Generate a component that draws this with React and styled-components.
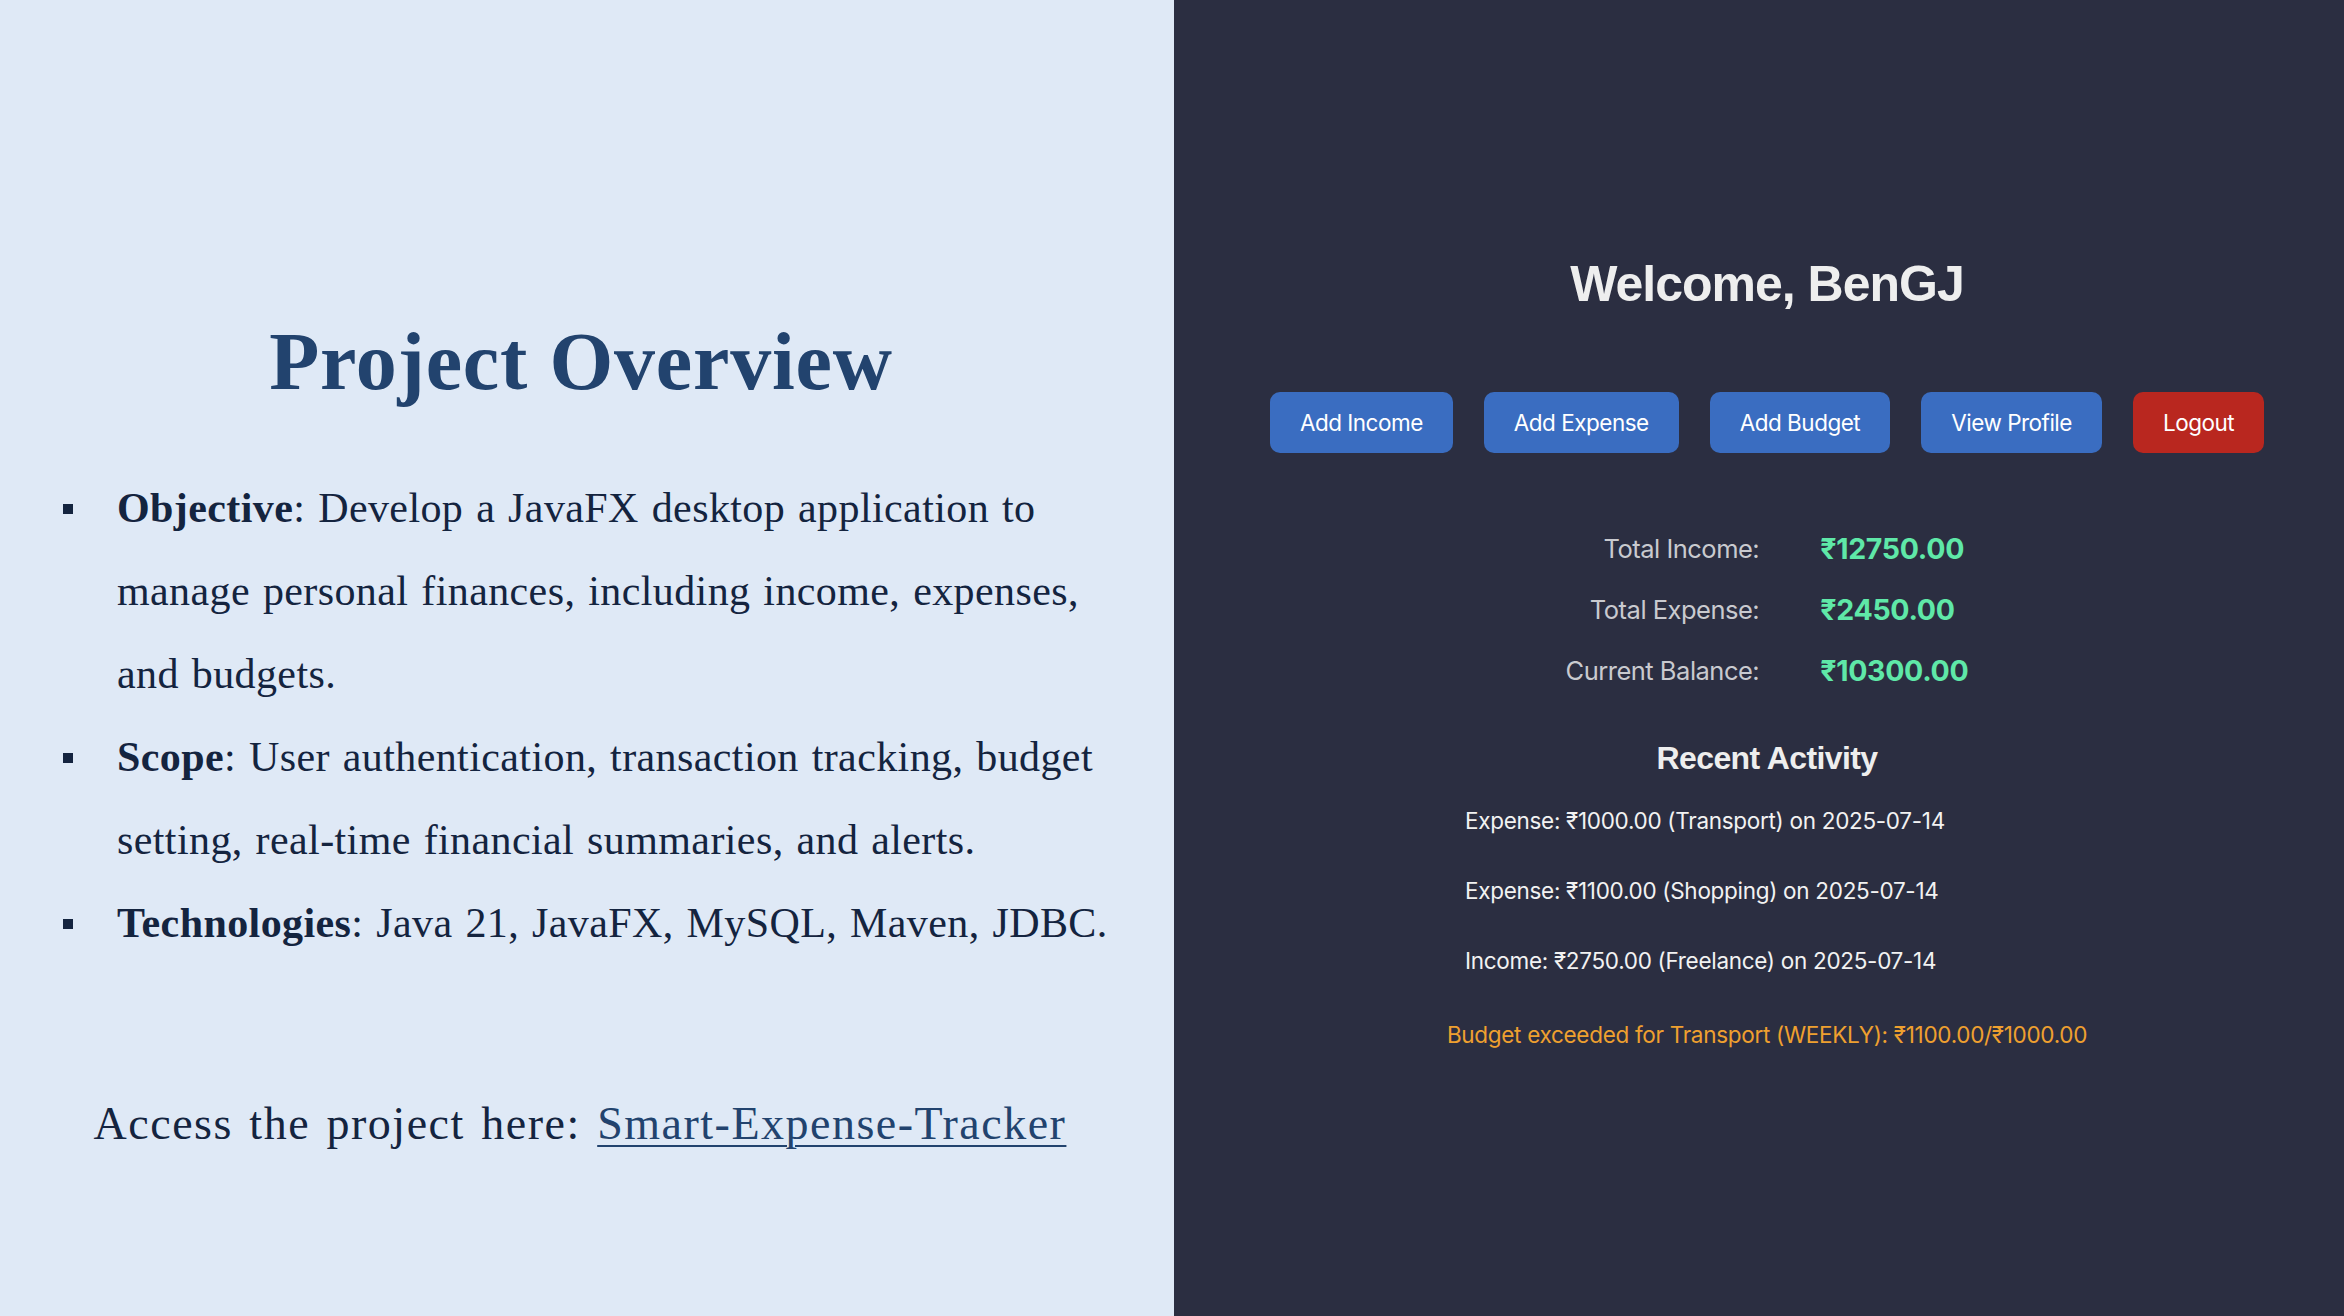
import React from 'react'
import styled, { createGlobalStyle } from 'styled-components'

const GlobalStyle = createGlobalStyle`
  html, body {
    margin: 0;
    padding: 0;
  }
  body {
    font-family: "Liberation Serif", serif;
  }
`

const Page = styled.div`
  display: flex;
  width: 2344px;
  height: 1316px;
  overflow: hidden;
`

const LeftPanel = styled.section`
  width: 1174px;
  flex-shrink: 0;
  background-color: #dfe9f6;
  color: #14243f;
  display: flex;
  flex-direction: column;
  padding: 313px 47px 0 63px;
  box-sizing: border-box;
  font-family: "Liberation Serif", "Times New Roman", serif;
`

const Title = styled.h1`
  margin: 0;
  text-align: center;
  font-size: 82px;
  line-height: 98px;
  font-weight: 700;
  letter-spacing: 0.8px;
  color: #22436e;
  padding-right: 28px;
`

const Bullets = styled.ul`
  list-style: none;
  margin: 56px 0 0 0;
  padding: 0;
`

const Bullet = styled.li`
  display: grid;
  grid-template-columns: 54px 1fr;
  font-size: 42px;
  line-height: 83px;
  letter-spacing: 0.4px;
  word-spacing: 2px;
`

const Marker = styled.span`
  width: 10px;
  height: 10px;
  margin-top: 37px;
  background-color: #14243f;
`

const Access = styled.p`
  margin: 133px 0 0 0;
  text-align: center;
  font-size: 46px;
  line-height: 52px;
  letter-spacing: 1.5px;
  word-spacing: 3.5px;
  padding-right: 30px;
`

const ProjectLink = styled.a`
  color: #22436e;
  text-decoration: underline;
  text-decoration-thickness: 2px;
  text-underline-offset: 6px;
`

const RightPanel = styled.section`
  flex: 1;
  background-color: #2b2e41;
  display: flex;
  flex-direction: column;
  align-items: center;
  padding: 254px 0 0 16px;
  box-sizing: border-box;
  font-family: Inter, "Liberation Sans", sans-serif;
`

const Welcome = styled.h2`
  margin: 0;
  font-family: "Liberation Sans", Arial, sans-serif;
  font-size: 50px;
  line-height: 60px;
  font-weight: 700;
  letter-spacing: -1px;
  color: #eeeeee;
`

const Toolbar = styled.div`
  display: flex;
  gap: 31px;
  margin-top: 78px;
`

const ActionButton = styled.button`
  height: 61px;
  padding: 0 30px;
  border: none;
  border-radius: 10px;
  background-color: ${props => (props.$danger ? '#b9271f' : '#3a6dc1')};
  color: #ffffff;
  font-family: Inter, "Liberation Sans", sans-serif;
  font-size: 22.5px;
  letter-spacing: -0.5px;
  cursor: pointer;
`

const Summary = styled.div`
  display: grid;
  grid-template-columns: auto auto;
  column-gap: 61px;
  margin-top: 65px;
  line-height: 61px;
`

const SummaryLabel = styled.span`
  text-align: right;
  color: #c9cacf;
  font-size: 25.5px;
  letter-spacing: -0.5px;
`

const SummaryValue = styled.span`
  color: #5fe8a8;
  font-size: 28.5px;
  font-weight: 700;
  letter-spacing: -0.3px;
`

const SectionTitle = styled.h3`
  margin: 37px 0 0 0;
  font-family: "Liberation Sans", Arial, sans-serif;
  font-size: 32px;
  line-height: 40px;
  font-weight: 700;
  letter-spacing: -0.6px;
  color: #eeeeee;
`

const ActivityList = styled.ul`
  list-style: none;
  width: 604px;
  margin: 28px 0 0 0;
  padding: 0;
  display: flex;
  flex-direction: column;
  gap: 40px;
`

const ActivityItem = styled.li`
  color: #f2f2f2;
  font-size: 22.5px;
  line-height: 30px;
  letter-spacing: -0.3px;
`

const Warning = styled.p`
  margin: 44px 0 0 0;
  color: #efa02f;
  font-size: 22.5px;
  line-height: 30px;
  letter-spacing: -0.3px;
`

const bullets = [
  {
    head: 'Objective',
    text: ': Develop a JavaFX desktop application to manage personal finances, including income, expenses, and budgets.',
  },
  {
    head: 'Scope',
    text: ': User authentication, transaction tracking, budget setting, real-time financial summaries, and alerts.',
  },
  {
    head: 'Technologies',
    text: ': Java 21, JavaFX, MySQL, Maven, JDBC.',
  },
]

const summary = [
  ['Total Income:', '₹12750.00'],
  ['Total Expense:', '₹2450.00'],
  ['Current Balance:', '₹10300.00'],
]

const activity = [
  'Expense: ₹1000.00 (Transport) on 2025-07-14',
  'Expense: ₹1100.00 (Shopping) on 2025-07-14',
  'Income: ₹2750.00 (Freelance) on 2025-07-14',
]

function App() {
  return (
    <Page>
      <GlobalStyle />
      <LeftPanel>
        <Title>Project Overview</Title>
        <Bullets>
          {bullets.map(item => (
            <Bullet key={item.head}>
              <Marker />
              <span>
                <b>{item.head}</b>
                {item.text}
              </span>
            </Bullet>
          ))}
        </Bullets>
        <Access>
          Access the project here: <ProjectLink href="#">Smart-Expense-Tracker</ProjectLink>
        </Access>
      </LeftPanel>

      <RightPanel>
        <Welcome>Welcome, BenGJ</Welcome>
        <Toolbar>
          <ActionButton>Add Income</ActionButton>
          <ActionButton>Add Expense</ActionButton>
          <ActionButton>Add Budget</ActionButton>
          <ActionButton>View Profile</ActionButton>
          <ActionButton $danger>Logout</ActionButton>
        </Toolbar>
        <Summary>
          {summary.map(([label, value]) => (
            <React.Fragment key={label}>
              <SummaryLabel>{label}</SummaryLabel>
              <SummaryValue>{value}</SummaryValue>
            </React.Fragment>
          ))}
        </Summary>
        <SectionTitle>Recent Activity</SectionTitle>
        <ActivityList>
          {activity.map(line => (
            <ActivityItem key={line}>{line}</ActivityItem>
          ))}
        </ActivityList>
        <Warning>Budget exceeded for Transport (WEEKLY): ₹1100.00/₹1000.00</Warning>
      </RightPanel>
    </Page>
  )
}

export default App
